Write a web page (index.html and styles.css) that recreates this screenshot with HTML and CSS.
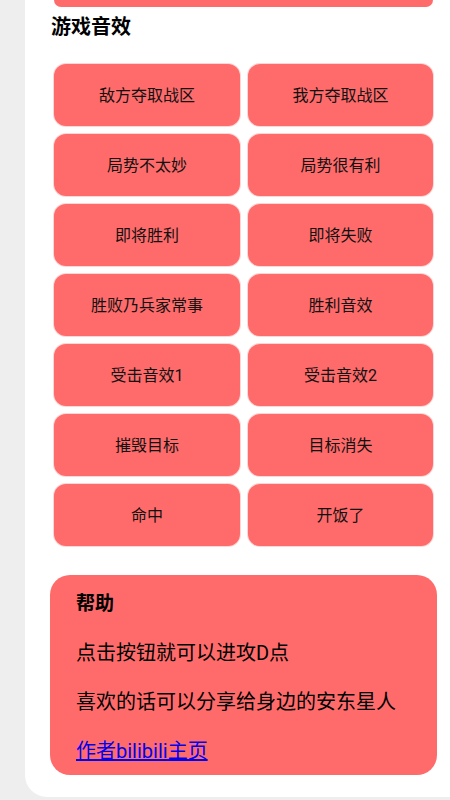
FILE: index.html
```html
<!DOCTYPE html>
<html lang="zh">
<head>
<meta charset="utf-8">
<link rel="stylesheet" href="styles.css">
</head>
<body>
<div class="page">
  <div class="panel">
    <div class="top-card"></div>
    <h2 class="title">游戏音效</h2>
    <div class="grid">
      <button class="btn">敌方夺取战区</button>
      <button class="btn">我方夺取战区</button>
      <button class="btn">局势不太妙</button>
      <button class="btn">局势很有利</button>
      <button class="btn">即将胜利</button>
      <button class="btn">即将失败</button>
      <button class="btn">胜败乃兵家常事</button>
      <button class="btn">胜利音效</button>
      <button class="btn">受击音效1</button>
      <button class="btn">受击音效2</button>
      <button class="btn">摧毁目标</button>
      <button class="btn">目标消失</button>
      <button class="btn">命中</button>
      <button class="btn">开饭了</button>
    </div>
    <div class="help">
      <h3 class="help-title">帮助</h3>
      <p class="help-text">点击按钮就可以进攻D点</p>
      <p class="help-text">喜欢的话可以分享给身边的安东星人</p>
      <a class="help-link" href="#">作者bilibili主页</a>
    </div>
  </div>
</div>
</body>
</html>
```
FILE: styles.css
```css
html, body {
  margin: 0;
  padding: 0;
  background: #eeeeee;
  font-family: Roboto, "Noto Sans CJK SC", sans-serif;
  color: #000;
}
.page {
  padding-left: 25px;
  height: 800px;
  overflow: hidden;
}
.panel {
  background: #ffffff;
  height: 797px;
  border-bottom-left-radius: 22px;
  box-sizing: border-box;
  overflow: hidden;
}
.top-card {
  height: 7px;
  margin: 0 17px 0 29px;
  background: #ff6b6b;
  border-radius: 0 0 12px 12px;
}
.title {
  margin: 4px 0 0 26px;
  font-size: 20px;
  font-weight: bold;
  line-height: 32px;
}
.grid {
  display: grid;
  grid-template-columns: 186px 185px;
  column-gap: 8px;
  row-gap: 8px;
  margin: 21px 0 0 29px;
}
.btn {
  height: 62px;
  border: none;
  border-radius: 12px;
  background: #ff6b6b;
  box-shadow: 0 0 0 1px #ffd6d6;
  font-family: Roboto, "Noto Sans CJK SC", sans-serif;
  font-size: 16px;
  color: #111;
  padding: 0 0 2px 0;
}
.help {
  margin: 29px 13px 0 25px;
  height: 200px;
  box-sizing: border-box;
  background: #ff6b6b;
  border-radius: 20px;
  padding: 15px 26px 0 26px;
}
.help-title {
  margin: 0;
  font-size: 19px;
  font-weight: bold;
  line-height: 28px;
}
.help-text {
  margin: 21px 0 0 0;
  font-size: 20px;
  line-height: 28px;
}
.help-link {
  display: inline-block;
  margin-top: 21px;
  font-size: 20px;
  line-height: 28px;
  color: #0000ee;
  text-decoration: underline;
}
```
